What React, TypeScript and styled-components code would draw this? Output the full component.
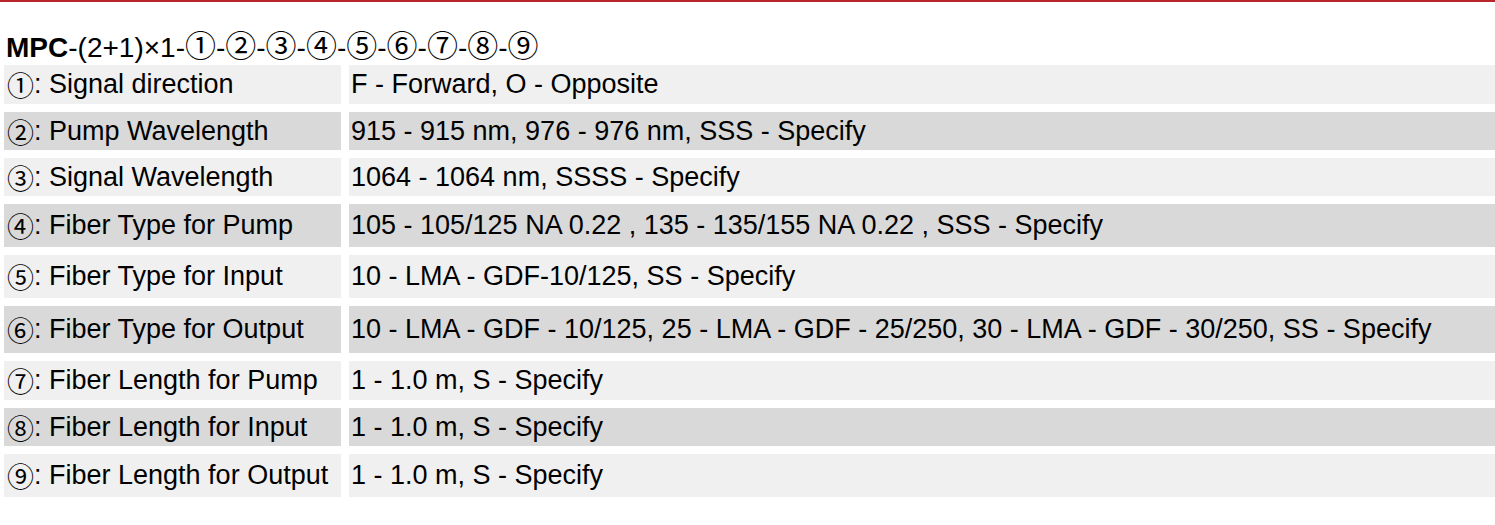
import React from "react";
import styled, { createGlobalStyle } from "styled-components";

const GlobalStyle = createGlobalStyle`
  html, body {
    margin: 0;
    padding: 0;
    background: #ffffff;
  }
  body {
    font-family: "Liberation Sans", Arial, sans-serif;
    color: #000000;
  }
`;

const Page = styled.div`
  width: 1495px;
  height: 525px;
  border-top: 2px solid #b8252b;
  box-sizing: border-box;
  padding-left: 4px;
`;

const Title = styled.div`
  padding: 26px 0 7px 2px;
  font-size: 28px;
  line-height: 30px;
  height: 30px;
  white-space: nowrap;
`;

const Bold = styled.b`
  font-weight: 700;
`;

const Circ = styled.span<{ $big?: boolean }>`
  font-family: "Noto Sans CJK JP", "Noto Sans CJK SC", "DejaVu Sans", sans-serif;
  font-weight: 400;
  font-size: ${(p) => (p.$big ? "31px" : "inherit")};
  line-height: 1;
`;

const Table = styled.div`
  display: flex;
  flex-direction: column;
  gap: 8px;
`;

const Row = styled.div<{ $h: number }>`
  display: grid;
  grid-template-columns: 337px 1fr;
  column-gap: 8px;
  height: ${(p) => p.$h}px;
`;

const Cell = styled.div<{ $dark: boolean }>`
  display: flex;
  align-items: center;
  background: ${(p) => (p.$dark ? "#d9d9d9" : "#f0f0f0")};
  font-size: 27px;
  white-space: nowrap;
  overflow: hidden;
`;

const Label = styled(Cell)`
  padding-left: 3px;
`;

const Value = styled(Cell)`
  padding-left: 2px;
`;

const circled = ["①", "②", "③", "④", "⑤", "⑥", "⑦", "⑧", "⑨"];

const rows: { label: string; value: string; h: number }[] = [
  { label: "Signal direction", value: "F - Forward, O - Opposite", h: 39 },
  { label: "Pump Wavelength", value: "915 - 915 nm, 976 - 976 nm, SSS - Specify", h: 38 },
  { label: "Signal Wavelength", value: "1064 - 1064 nm, SSSS - Specify", h: 38 },
  { label: "Fiber Type for Pump", value: "105 - 105/125 NA 0.22 , 135 - 135/155 NA 0.22 , SSS - Specify", h: 43 },
  { label: "Fiber Type for Input", value: "10 - LMA - GDF-10/125, SS - Specify", h: 43 },
  {
    label: "Fiber Type for Output",
    value: "10 - LMA - GDF - 10/125, 25 - LMA - GDF - 25/250, 30 - LMA - GDF - 30/250, SS - Specify",
    h: 47,
  },
  { label: "Fiber Length for Pump", value: "1 - 1.0 m, S - Specify", h: 39 },
  { label: "Fiber Length for Input", value: "1 - 1.0 m, S - Specify", h: 38 },
  { label: "Fiber Length for Output", value: "1 - 1.0 m, S - Specify", h: 43 },
];

export default function App() {
  return (
    <>
      <GlobalStyle />
      <Page>
        <Title>
          <Bold>MPC</Bold>-(2+1)×1-
          {circled.map((c, i) => (
            <React.Fragment key={c}>
              <Circ $big>{c}</Circ>
              {i < circled.length - 1 ? "-" : ""}
            </React.Fragment>
          ))}
        </Title>
        <Table>
          {rows.map((r, i) => (
            <Row key={r.label} $h={r.h}>
              <Label $dark={i % 2 === 1}>
                <Circ>{circled[i]}</Circ>: {r.label}
              </Label>
              <Value $dark={i % 2 === 1}>{r.value}</Value>
            </Row>
          ))}
        </Table>
      </Page>
    </>
  );
}
